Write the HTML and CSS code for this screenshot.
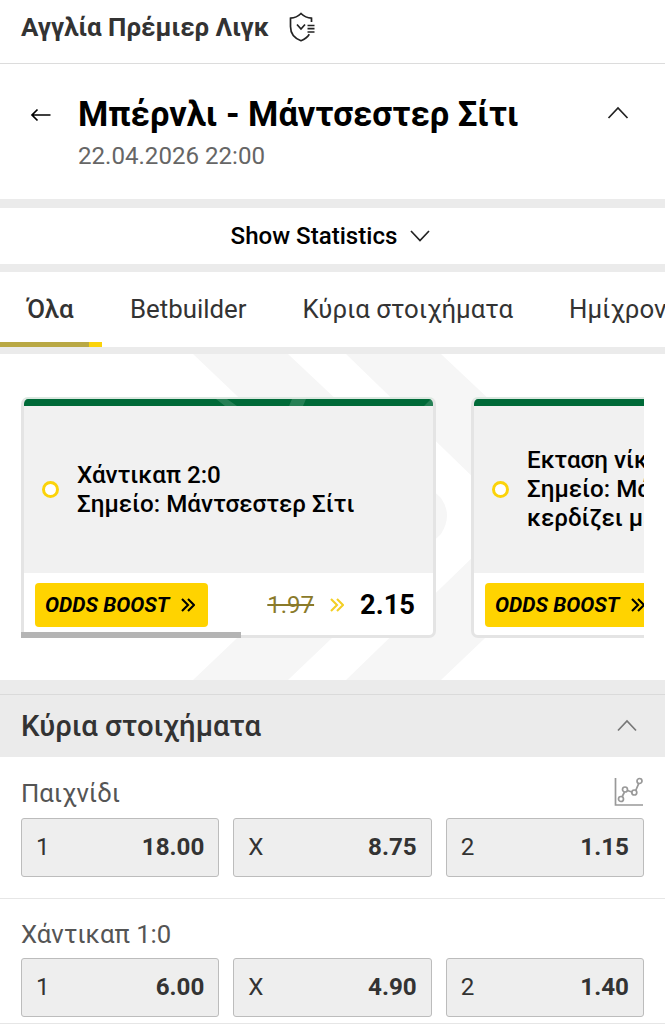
FILE: index.html
```html
<!DOCTYPE html>
<html lang="el">
<head>
  <meta charset="UTF-8">
  <title>Μπέρνλι - Μάντσεστερ Σίτι</title>
  <link rel="stylesheet" href="styles.css">
</head>
<body>

  <div class="league">
    <span class="league-name">Αγγλία Πρέμιερ Λιγκ</span>
    <svg class="shield" width="28" height="30" viewBox="0 0 28 30">
      <path d="M22.5 10V6.2C18.500 6 15 4.500 12 1.500C9 4.500 5.500 6 1.500 6.200V14.500C1.500 21.500 6 26.500 12 28.700C15.500 27.400 18.500 25.200 20.300 22.300"/>
      <path d="M8 12.500L12 17L16 12.500"/>
      <path d="M18.500 13.500H25.500M18.500 16.700H25.500M18.500 20H25.500"/>
    </svg>
  </div>

  <header class="match">
    <svg class="back" width="22" height="16" viewBox="0 0 22 16"><path d="M20.500 8H2M7.500 2.500L2 8L7.500 13.500"/></svg>
    <div class="match-info">
      <h1>Μπέρνλι - Μάντσεστερ Σίτι</h1>
      <p>22.04.2026 22:00</p>
    </div>
    <svg class="collapse" width="22" height="14" viewBox="0 0 22 14"><path d="M1.500 12L11 2L20.500 12"/></svg>
  </header>

  <div class="stats">
    <span>Show Statistics</span>
    <svg width="20" height="14" viewBox="0 0 20 14"><path d="M1 2L10 11.500L19 2"/></svg>
  </div>

  <nav class="tabs">
    <a class="tab active">Όλα</a>
    <a class="tab">Betbuilder</a>
    <a class="tab">Κύρια στοιχήματα</a>
    <a class="tab">Ημίχρονο</a>
  </nav>

  <section class="boosts">
    <svg class="watermark" width="665" height="326" viewBox="0 0 665 326">
      <path d="M193 0H288L441 144Q453 161 441 180L288 326H193L364 163Z"/>
      <path d="M346 0H441L594 144Q606 161 594 180L441 326H346L514 163Z"/>
    </svg>
    <div class="boost-list">
      <div class="boost-card">
        <svg class="shine" width="411" height="7" viewBox="0 0 411 7">
          <path d="M192 0H203L213 7H201ZM268 0H282L279 7H265ZM407 0H411V7H400Z"/>
        </svg>
        <div class="boost-top">
          <span class="dot"></span>
          <p>Χάντικαπ 2:0<br>Σημείο: Μάντσεστερ Σίτι</p>
        </div>
        <div class="boost-bottom">
          <div class="badge">ODDS BOOST
            <svg width="14" height="16" viewBox="0 0 14 16"><path d="M1 2L7 8L1 14M7 2L13 8L7 14"/></svg>
          </div>
          <div class="price">
            <s>1.97</s>
            <svg width="14" height="16" viewBox="0 0 14 16"><path d="M1 2L7 8L1 14M7 2L13 8L7 14"/></svg>
            <b>2.15</b>
          </div>
        </div>
      </div>
      <div class="boost-card">
        <div class="boost-top">
          <span class="dot"></span>
          <p>Εκταση νίκης<br>Σημείο: Μάντσεστερ Σίτι<br>κερδίζει με 2+</p>
        </div>
        <div class="boost-bottom">
          <div class="badge">ODDS BOOST
            <svg width="14" height="16" viewBox="0 0 14 16"><path d="M1 2L7 8L1 14M7 2L13 8L7 14"/></svg>
          </div>
        </div>
      </div>
      <div class="scrollbar"></div>
    </div>
  </section>

  <div class="section-head">
    <h2>Κύρια στοιχήματα</h2>
    <svg width="20" height="13" viewBox="0 0 20 13"><path d="M1 11.500L10 2L19 11.500"/></svg>
  </div>

  <div class="market">
    <div class="market-title">
      <span>Παιχνίδι</span>
      <svg class="chart" width="30" height="30" viewBox="0 0 30 30">
        <path d="M1.500 1V28H29"/>
        <path d="M8 20L10.500 15M13.500 13.500L18.500 15.300M21.500 14L24.800 6.300"/>
        <circle cx="7" cy="22" r="2.500"/><circle cx="11" cy="12.500" r="2.500"/><circle cx="20.300" cy="15.500" r="2.500"/><circle cx="25.500" cy="4" r="2.500"/>
      </svg>
    </div>
    <div class="odds">
      <button><span>1</span><b>18.00</b></button>
      <button><span>X</span><b>8.75</b></button>
      <button><span>2</span><b>1.15</b></button>
    </div>
  </div>

  <div class="market">
    <div class="market-title">
      <span>Χάντικαπ 1:0</span>
    </div>
    <div class="odds">
      <button><span>1</span><b>6.00</b></button>
      <button><span>X</span><b>4.90</b></button>
      <button><span>2</span><b>1.40</b></button>
    </div>
  </div>

</body>
</html>
```
FILE: styles.css
```css
* {
  box-sizing: border-box;
}
body {
  margin: 0;
  height: 1024px;
  overflow: hidden;
  font-family: Roboto, "Noto Sans", sans-serif;
  font-size: 24px;
  color: #333;
  background-color: #fff;
}
h1, h2, p {
  margin: 0;
}
svg {
  display: block;
  flex: none;
  fill: none;
  stroke: #222;
  stroke-width: 1.7;
}

/* top */
.league {
  display: flex;
  align-items: center;
  gap: 20px;
  height: 64px;
  padding: 0 21px 9px;
  border-bottom: 1px solid #dcdcdc;
}
.league-name {
  font-size: 25.9px;
  font-weight: 700;
  white-space: nowrap;
}
.match {
  display: flex;
  height: 144px;
  padding: 0 36px 0 30px;
  border-bottom: 9px solid #ebebeb;
}
.back {
  margin-top: 43px;
  stroke: #000;
}
.match-info {
  flex: 1;
  padding: 30px 0 0 26px;
}
h1 {
  font-size: 34.6px;
  line-height: 40px;
  font-weight: 700;
  color: #000;
  white-space: nowrap;
}
.match-info p {
  line-height: 28px;
  margin-top: 8px;
  font-size: 24.1px;
  color: #666;
}
.collapse {
  margin-top: 42px;
}
.stats {
  display: flex;
  justify-content: center;
  align-items: center;
  gap: 13px;
  height: 64px;
  padding-right: 4px;
  border-bottom: 8px solid #ebebeb;
  font-size: 24.1px;
  font-weight: 500;
  color: #000;
}
.tabs {
  display: flex;
  height: 82px;
  overflow: hidden;
  border-bottom: 7px solid #ebebeb;
}
.tab {
  flex: none;
  padding: 0 28px;
  line-height: 74px;
  font-size: 25.8px;
}
.tab.active {
  width: 102px;
  padding: 0 0 0 27px;
  font-weight: 500;
  background: linear-gradient(#b9a844, #b9a844) 0 70px / 89px 5px no-repeat,
              linear-gradient(#fbd30a, #fbd30a) 0 70px / 102px 5px no-repeat;
}

/* odds boost */
.boosts {
  position: relative;
  height: 326px;
  padding: 43px 21px 0;
}
.watermark {
  position: absolute;
  top: 0;
  left: 0;
  fill: #f6f6f6;
  stroke: none;
}
.boost-list {
  position: relative;
  display: flex;
  gap: 35px;
  height: 241px;
  overflow: hidden;
}
.boost-card {
  position: relative;
  flex: none;
  width: 415px;
  height: 241px;
  border: 3px solid #e4e4e4;
  border-top: 2px solid #dbe8e0;
  border-radius: 7px;
  overflow: hidden;
  background-color: #fff;
  color: #000;
}
/* light streaks over the green edge */
.shine {
  position: absolute;
  top: 0;
  left: 0;
  fill: #fff;
  fill-opacity: 0.15;
  stroke: none;
}
.boost-top {
  display: flex;
  align-items: center;
  gap: 18px;
  height: 174px;
  padding-left: 18px;
  border-top: 7px solid #006a38;
  background-color: #f1f1f1;
  font-size: 24.2px;
  font-weight: 500;
  line-height: 29px;
  white-space: nowrap;
}
.dot {
  width: 17px;
  height: 17px;
  border: 3px solid #fbd30a;
  border-radius: 50%;
  background-color: #fff;
}
.boost-bottom {
  display: flex;
  align-items: center;
  justify-content: space-between;
  height: 64px;
  padding: 0 18px 0 10.5px;
}
.badge {
  display: flex;
  align-items: center;
  gap: 11px;
  width: 173px;
  height: 44px;
  padding-left: 10.5px;
  border-radius: 4px;
  background-color: #ffd300;
  font-size: 21px;
  font-weight: 700;
  font-style: italic;
  white-space: nowrap;
}
.badge svg {
  stroke: #000;
  stroke-width: 2.1;
}
.price {
  display: flex;
  align-items: center;
  gap: 16px;
}
.price s {
  color: #8a7a2a;
}
.price svg {
  stroke: #f3cf25;
  stroke-width: 2.1;
}
.price b {
  padding-left: 0;
  font-size: 27.300px;
}
.scrollbar {
  position: absolute;
  left: 0;
  bottom: 0;
  width: 220px;
  height: 6px;
  background-color: #b4b4b4;
}

/* markets */
.section-head {
  display: flex;
  align-items: center;
  justify-content: space-between;
  height: 77px;
  padding: 0 28px 0 21px;
  border-top: 14px solid #ebebeb;
  background-color: #ebebeb;
  box-shadow: inset 0 1px #dadada;
}
h2 {
  font-size: 29.3px;
  font-weight: 500;
}
.section-head svg {
  stroke: #777;
}
.market {
  height: 142px;
  padding: 19px 21px 0;
  border-bottom: 1px solid #e6e6e6;
}
.market + .market {
  height: 125px;
  padding-top: 18px;
}
.market-title {
  display: flex;
  justify-content: space-between;
  height: 42px;
  line-height: 35px;
  font-size: 25.7px;
  color: #555;
}
.market + .market .market-title {
  height: 41px;
}
.chart {
  margin-top: 1px;
  stroke: #999;
}
.odds {
  display: grid;
  grid-template-columns: repeat(3, 1fr);
  gap: 14px;
}
button {
  display: flex;
  align-items: center;
  justify-content: space-between;
  height: 59px;
  padding: 0 14px 1px;
  border: 1px solid #bcbcbc;
  border-radius: 3px;
  background-color: #eee;
  font: inherit;
  font-size: 24.2px;
  color: #333;
}
```
